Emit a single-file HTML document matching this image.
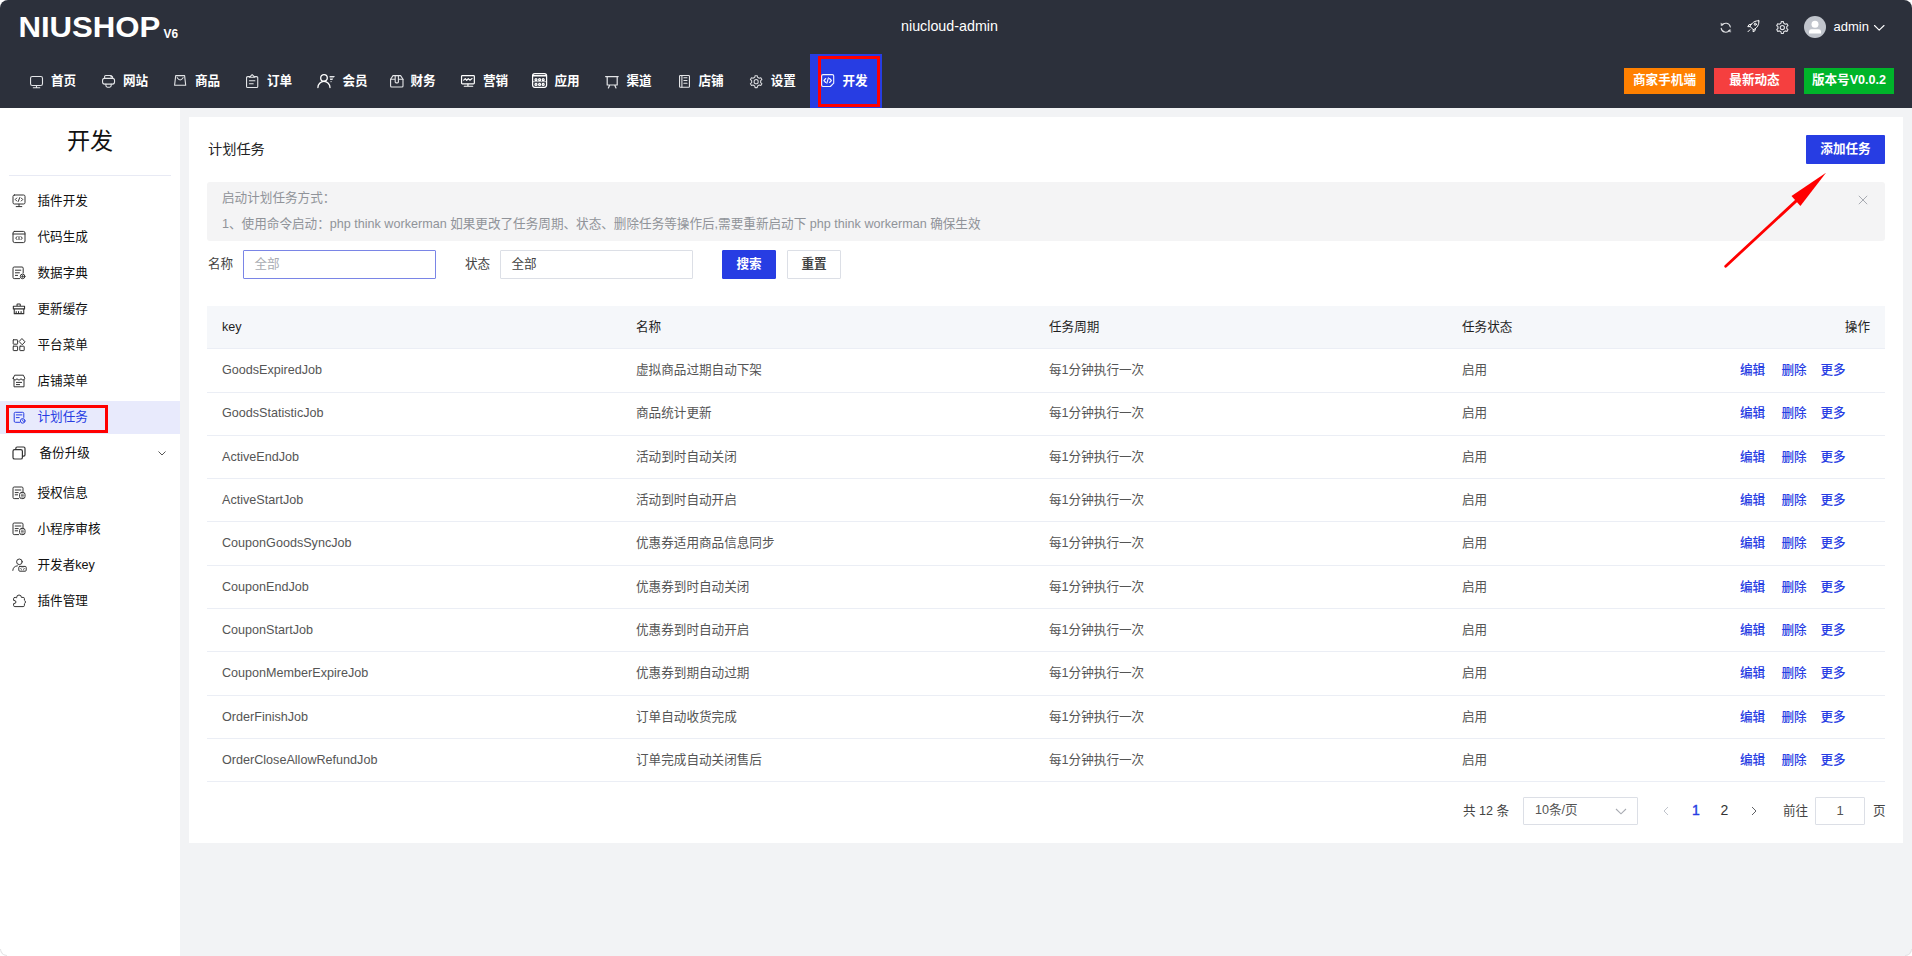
<!DOCTYPE html>
<html lang="zh-CN">
<head>
<meta charset="utf-8">
<title>计划任务</title>
<style>
*{box-sizing:border-box;margin:0;padding:0}
html,body{width:1912px;height:956px;overflow:hidden;background:#fff}
body{font-family:"Liberation Sans","Noto Sans CJK SC",sans-serif;font-size:13px;color:#333;position:relative}
svg{display:block;overflow:visible}
#hdr{position:absolute;left:0;top:0;width:1912px;height:108px;background:#2c303b;border-radius:8px 8px 0 0}
#hdr svg.ic,#hdr>svg{position:absolute}
#logo{left:20px;top:15px}
#title{position:absolute;left:0;width:1899px;top:17px;text-align:center;color:#fff;font-size:14.3px;line-height:18px}
#avatar{position:absolute;left:1804px;top:16px;width:22px;height:22px;border-radius:50%;background:#c0c4cc;overflow:hidden}
#uname{position:absolute;left:1833.5px;top:18px;color:#fff;font-size:13px;line-height:18px}
.nav{position:absolute;top:70.5px;height:20px;line-height:20px;color:#fff;font-size:12.6px;font-weight:bold;white-space:nowrap}
#navact{position:absolute;left:810px;top:54px;width:72px;height:54px;background:#273de3}
#navred{position:absolute;left:818px;top:56px;width:62px;height:51px;border:3px solid #ff0000}
.tag{position:absolute;top:68px;height:26px;line-height:25.4px;color:#fff;font-size:12.6px;font-weight:bold;text-align:center;white-space:nowrap}
#side{position:absolute;left:0;top:108px;width:180px;height:848px;background:#fff}
#stitle{position:absolute;left:0;top:15px;width:180px;text-align:center;font-size:23.1px;line-height:36px;color:#111}
#sline{position:absolute;left:9px;top:66.5px;width:162px;height:1px;background:#e8eaf4}
.mi{position:absolute;left:0;width:180px;height:33px;line-height:33px;font-size:12.6px;color:#111;white-space:nowrap}
.mi .mic{position:absolute;left:11.5px;top:9.5px;width:14px;height:14px}
.mi .mt{position:absolute;top:.6px}
.mi.act{background:#e8eafc;color:#273de3}
#sidered{position:absolute;left:6px;top:297px;width:102px;height:28px;border:3px solid #ff0000}
#main{position:absolute;left:180px;top:108px;width:1732px;height:848px;background:#f2f3f5;border-radius:0 0 7px 0}
#card{position:absolute;left:189px;top:117px;width:1714px;height:726px;background:#fff}
#ptitle{position:absolute;left:19px;top:21.7px;font-size:14.2px;line-height:20px;color:#222}
#addbtn{position:absolute;left:1617px;top:18px;width:79px;height:28.5px;line-height:28.5px;background:#273de3;color:#fff;font-size:12.6px;font-weight:bold;text-align:center;border-radius:1px}
#alert{position:absolute;left:18px;top:65px;width:1678px;height:58.5px;background:#f4f4f5;border-radius:3px;color:#909399;font-size:12.6px;white-space:nowrap}
#alert .al1{position:absolute;left:15px;top:6px;line-height:20px}
#alert .al2{position:absolute;left:15px;top:31.6px;line-height:20px}
#alert svg{position:absolute}
.lbl{position:absolute;top:136.7px;line-height:20px;font-size:12.6px;color:#444}
.inp{position:absolute;top:133px;width:193px;height:28.7px;border:1px solid #dcdfe6;border-radius:1px;font-size:12.6px;line-height:26.7px;padding-left:10.4px;background:#fff}
.inp.foc{border-color:#7a85e6}
.ph{color:#a8abb2}.pv{color:#444}
.btn{position:absolute;top:133px;width:54px;height:28.5px;line-height:26.5px;border:1px solid #dcdfe6;border-radius:1px;text-align:center;font-size:12.6px;font-weight:bold;color:#444;background:#fff}
.btn.pri{background:#273de3;border-color:#273de3;color:#fff}
#thead{position:absolute;left:18px;top:189px;width:1678px;height:42.5px;background:#f5f7fa;border-bottom:1px solid #ebeef5}
.th,.td{position:absolute;white-space:nowrap;font-size:12.6px;line-height:20px}
.th{color:#1f1f1f;top:11px}
.tr{position:absolute;left:18px;width:1678px;height:43.3px}
.bl{position:absolute;left:18px;width:1678px;height:1px;background:#ebeef5}
.td{color:#555;top:11px}
.td.k{}
.td.lnk{color:#273de3;font-weight:500}
#pg{position:absolute;left:0;top:680px;width:1714px;height:28px;font-size:12.6px;color:#444}
#pg svg{position:absolute}
.pt{position:absolute;top:4px;line-height:20px;white-space:nowrap}
.psel{position:absolute;left:1334px;top:0;width:115px;height:28px;border:1px solid #dcdfe6;border-radius:1px;line-height:24px;padding-left:11px;font-size:12.6px;color:#555}
.pn{position:absolute;top:3px;width:20px;text-align:center;line-height:20px;font-size:14px;color:#333}
.pn.cur{color:#273de3;-webkit-text-stroke:.4px #273de3}
.pinp{position:absolute;left:1626px;top:0;width:50px;height:28px;border:1px solid #dcdfe6;border-radius:1px;line-height:26px;text-align:center;font-size:13px;color:#555}
#arrow{position:absolute;left:0;top:0}
.cnr{position:absolute;bottom:0;width:7px;height:7px;border:1px solid #e4e4e6}
.cnr.l{left:0;border-width:0 0 1px 1px;border-radius:0 0 0 7px}
.cnr.r{right:0;border-width:0 1px 1px 0;border-radius:0 0 7px 0}
</style>
</head>
<body>
<div id="hdr">
<svg id="logo" width="170" height="30" viewBox="0 0 170 30"><text x="-1.6" y="22.3" font-family="Liberation Sans, sans-serif" font-weight="bold" font-size="29.3" fill="#fff" textLength="142" lengthAdjust="spacingAndGlyphs">NIUSHOP</text><text x="143.5" y="22.7" font-family="Liberation Sans, sans-serif" font-weight="bold" font-size="12.5" fill="#fff" textLength="14.5" lengthAdjust="spacingAndGlyphs">V6</text></svg>
<div id="title">niucloud-admin</div>
<svg class="ic" style="left:1719.6px;top:21.8px" width="11.5" height="11.3" viewBox="0 0 11.5 11.3" fill="none" stroke="#e4e5e8" stroke-width="1.1" stroke-linecap="round" stroke-linejoin="round"><path d="M2 3.200A4.600 4.600 0 0 1 10.300 5M1.200 6.300A4.600 4.600 0 0 0 9.500 8.200"/><path d="M1 1.200L3.600 2.300L1.300 3.700ZM10.500 10.100L7.900 9L10.200 7.600Z" fill="#e4e5e8" stroke-width=".3"/></svg>
<svg class="ic" style="left:1747.4px;top:20.2px" width="12.5" height="12.7" viewBox="0 0 12.5 12.7" fill="none" stroke="#fff" stroke-width="1" stroke-linecap="round" stroke-linejoin="round"><path d="M11.800 .8C8.500 .3 4.200 3 3.100 6.500L6.300 9.700C9.800 8.600 12.500 4.300 11.800 .8Z"/><circle cx="8.300" cy="4.300" r="1.050"/><path d="M4.300 4.300L1.900 4.800L.8 6.700L3.100 6.600M8.500 8.300L8 10.700L6.100 11.800L6.200 9.600M2.900 9.800L1 11.700"/></svg>
<svg class="ic" style="left:1775.7px;top:20.9px" width="12.7" height="13.1" viewBox="0 0 12.7 13.1" fill="none" stroke="#e0e1e5" stroke-width="1.1" stroke-linecap="round" stroke-linejoin="round"><path d="M4.98 2.26L5.28 0.65L7.42 0.65L7.72 2.26L9.38 3.22L10.93 2.67L12.00 4.52L10.75 5.59L10.75 7.51L12.00 8.58L10.93 10.43L9.38 9.88L7.72 10.84L7.42 12.45L5.28 12.45L4.98 10.84L3.32 9.88L1.77 10.43L0.70 8.58L1.95 7.51L1.95 5.59L0.70 4.52L1.77 2.67L3.32 3.22Z"/><circle cx="6.350" cy="6.550" r="2.100"/></svg>
<div id="avatar"><svg width="22" height="22" viewBox="0 0 22 22"><circle cx="11" cy="8.2" r="3.5" fill="#fff"/><path d="M5 17.6V15.6Q5 13.2 7.4 13.2H14.6Q17 13.2 17 15.6V17.6Z" fill="#fff"/></svg></div>
<div id="uname">admin</div>
<svg class="ic" style="left:1874px;top:24.5px" width="11" height="6" viewBox="0 0 11 6" fill="none" stroke="#fff" stroke-width="1.1" stroke-linecap="round" stroke-linejoin="round" ><path d="M.5 .5L5.2 5.2L10 .5"/></svg>
<div id="navact"></div>
<div class="nav" style="left:51px">首页</div>
<svg class="ic" style="left:29.75px;top:75.6px" width="13.05" height="12.3" viewBox="0 0 13.05 12.3" fill="none" stroke="#e4e5e8" stroke-width="1.1" stroke-linecap="round" stroke-linejoin="round"><rect x=".55" y=".55" width="11.95" height="8.9" rx="1.8"/><path d="M6.5 9.6V11.4M3.3 11.75H9.8"/></svg>
<div class="nav" style="left:123px">网站</div>
<svg class="ic" style="left:101.9px;top:75.3px" width="13.1" height="12.8" viewBox="0 0 13.1 12.8" fill="none" stroke="#e4e5e8" stroke-width="1.1" stroke-linecap="round" stroke-linejoin="round"><path d="M2.6 3.4V1.6Q2.6 .55 3.7 .55H9.2L10.6 1.9V3.4M9 .7V2H10.4"/><rect x=".55" y="3.4" width="12" height="5.7" rx="2"/><path d="M3.9 9.1V10.6Q3.9 12.2 5.5 12.2H7.6Q9.2 12.2 9.2 10.6V9.1"/></svg>
<div class="nav" style="left:195px">商品</div>
<svg class="ic" style="left:174px;top:75.1px" width="12.3" height="10.9" viewBox="0 0 12.3 10.9" fill="none" stroke="#e4e5e8" stroke-width="1.1" stroke-linecap="round" stroke-linejoin="round"><path d="M.6 10.3L1.7 .6H10.6L11.7 10.3Z"/><path d="M3.2 2.7Q6.15 7.2 9.1 2.7"/></svg>
<div class="nav" style="left:267px">订单</div>
<svg class="ic" style="left:245.9px;top:74px" width="12.3" height="14.1" viewBox="0 0 12.3 14.1" fill="none" stroke="#e4e5e8" stroke-width="1.1" stroke-linecap="round" stroke-linejoin="round"><path d="M3.7 2.6H1.7Q.55 2.6 .55 3.7V12.4Q.55 13.5 1.7 13.5H10.6Q11.75 13.5 11.75 12.4V3.7Q11.75 2.6 10.6 2.6H8.6"/><path d="M3.5 3.200L6.150 .6L8.800 3.200Z"/><path d="M3.4 6.800H8.900M3.400 9.800H7.200"/></svg>
<div class="nav" style="left:342.5px">会员</div>
<svg class="ic" style="left:316.9px;top:73.8px" width="17.9" height="14.1" viewBox="0 0 17.9 14.1" fill="none" stroke="#fff" stroke-width="1.1" stroke-linecap="round" stroke-linejoin="round"><circle cx="7" cy="3.9" r="3.300" stroke-width="1.3"/><path d="M.9 13.500A6.050 6.050 0 0 1 13 13.500" stroke-width="1.3"/><path d="M12.500 2H17.900L16.900 3.600H12.700ZM12.900 4.500H16.200L15.400 6H13.200ZM13.500 6.900H14.800L14.200 8.200H13.700Z" fill="#e4e5e8" stroke="none"/></svg>
<div class="nav" style="left:410.5px">财务</div>
<svg class="ic" style="left:389.8px;top:75.3px" width="13.6" height="12.6" viewBox="0 0 13.6 12.6" fill="none" stroke="#e4e5e8" stroke-width="1.1" stroke-linecap="round" stroke-linejoin="round"><path d="M.6 4.200L3 .6H10.600L13 4.200V11Q13 12 12 12H1.600Q.6 12 .6 11Z"/><path d="M.6 4.200H5.200M8.400 4.200H13M5.200 .8V7Q5.200 7.900 6.100 7.900H7.500Q8.400 7.900 8.400 7V.8"/></svg>
<div class="nav" style="left:483px">营销</div>
<svg class="ic" style="left:461px;top:75.1px" width="13.9" height="11.8" viewBox="0 0 13.9 11.8" fill="none" stroke="#fff" stroke-width="1.2" stroke-linecap="round" stroke-linejoin="round"><rect x=".55" y=".55" width="12.800" height="8.300" rx=".8"/><path d="M2.700 5.200L4.300 3.600L5.700 5.400L7.300 3.600L8.900 5.200L11.100 3.600M6.950 9V11M3.300 11.250H11.700"/></svg>
<div class="nav" style="left:554.5px">应用</div>
<svg class="ic" style="left:532.1px;top:73.2px" width="15.2" height="14.9" viewBox="0 0 15.2 14.9" fill="none" stroke="#fff" stroke-width="1.25" stroke-linecap="round" stroke-linejoin="round"><rect x=".6" y=".6" width="14" height="13.700" rx="2.200"/><path d="M.8 2.700H14.400" stroke-width="1.500"/><path d="M1 8.700H14.200" stroke-width=".7"/><circle cx="4" cy="6.700" r="1"/><circle cx="7.600" cy="6.700" r="1"/><circle cx="11.200" cy="6.700" r="1"/><circle cx="4" cy="11.400" r="1"/><circle cx="7.600" cy="11.400" r="1"/><circle cx="11.200" cy="11.400" r="1"/></svg>
<div class="nav" style="left:626.5px">渠道</div>
<svg class="ic" style="left:605.1px;top:75.5px" width="13.8" height="12.6" viewBox="0 0 13.8 12.6" fill="none" stroke="#e4e5e8" stroke-width="1.2" stroke-linecap="round" stroke-linejoin="round"><path d="M.6 .6H13.200M2.200 .8V9H12.200V.8M4.600 9.200L3.400 12M9.800 9.200L11 12"/></svg>
<div class="nav" style="left:698.5px">店铺</div>
<svg class="ic" style="left:678.8px;top:75.1px" width="11.0" height="12.8" viewBox="0 0 11.0 12.8" fill="none" stroke="#e4e5e8" stroke-width="1.1" stroke-linecap="round" stroke-linejoin="round"><rect x=".55" y=".55" width="9.900" height="11.700" rx=".8"/><path d="M2.900 .7V12.100M4.900 2.800H8M4.900 5.450H8M4.900 8.300H8"/></svg>
<div class="nav" style="left:770.7px">设置</div>
<svg class="ic" style="left:749.8px;top:74.8px" width="12.3" height="13.3" viewBox="0 0 12.3 13.3" fill="none" stroke="#d8d9dd" stroke-width="1.05" stroke-linecap="round" stroke-linejoin="round"><path d="M4.75 2.27L5.07 0.65L7.23 0.65L7.55 2.27L9.25 3.25L10.81 2.71L11.89 4.59L10.64 5.67L10.64 7.63L11.89 8.71L10.81 10.59L9.25 10.05L7.55 11.03L7.23 12.65L5.07 12.65L4.75 11.03L3.05 10.05L1.49 10.59L0.41 8.71L1.66 7.63L1.66 5.67L0.41 4.59L1.49 2.71L3.05 3.25Z"/><circle cx="6.15" cy="6.65" r="2.05"/></svg>
<div class="nav" style="left:842.5px">开发</div>
<svg class="ic" style="left:820.8px;top:74px" width="13.3" height="13.1" viewBox="0 0 13.3 13.1" fill="none" stroke="#f0f1ff" stroke-width="1.15" stroke-linecap="round" stroke-linejoin="round"><path d="M2 .6H11.300Q12.700 .6 12.700 2V9.200L9.400 12.500H2Q.6 12.500 .6 11.100V2Q.6 .6 2 .6Z"/><path d="M4.700 4.500L2.900 6.500L4.700 8.500M8.600 4.500L10.400 6.500L8.600 8.500M7.400 3.900L5.900 9.100"/></svg>
<div id="navred"></div>
<div class="tag" style="left:1624px;width:81px;background:#ff8000">商家手机端</div>
<div class="tag" style="left:1714px;width:81px;background:#f53f3f">最新动态</div>
<div class="tag" style="left:1804px;width:90px;background:#00b42a">版本号V0.0.2</div>
</div>
<div id="side">
<div id="stitle">开发</div><div id="sline"></div>
<div class="mi" style="top:76px"><span class="mic"><svg width="14" height="14" viewBox="0 0 14 14" fill="none" stroke="#333" stroke-width="1.0" stroke-linecap="round" stroke-linejoin="round"><rect x="1" y="1" width="12" height="9" rx="1.4"/><path d="M7 10.200V12.4M4.200 12.600H9.800M4.700 4L3.300 5.500L4.700 7M9.300 4L10.700 5.500L9.300 7M7.700 3.600L6.300 7.400" /></svg></span><span class="mt" style="left:37.5px">插件开发</span></div>
<div class="mi" style="top:112px"><span class="mic"><svg width="14" height="14" viewBox="0 0 14 14" fill="none" stroke="#333" stroke-width="1.0" stroke-linecap="round" stroke-linejoin="round"><rect x="1" y="1.400" width="12" height="11.200" rx="1.600"/><path d="M1 4H13M5 6.600L3.700 8.100L5 9.600M9 6.600L10.300 8.100L9 9.600M7 6.600V9.600"/></svg></span><span class="mt" style="left:37.5px">代码生成</span></div>
<div class="mi" style="top:148px"><span class="mic"><svg width="14" height="14" viewBox="0 0 14 14" fill="none" stroke="#333" stroke-width="1.0" stroke-linecap="round" stroke-linejoin="round"><path d="M7.600 12.600H2.200Q1 12.600 1 11.400V2.200Q1 1 2.200 1H10Q11.200 1 11.200 2.200V7"/><path d="M3.400 4.200H8.800M3.400 6.800H7.400M3.400 9.400H5.600"/><circle cx="10.600" cy="10.400" r="2.300"/><path d="M9.500 10.400H11.700M10.600 9.300V11.500" stroke-width=".8"/></svg></span><span class="mt" style="left:37.5px">数据字典</span></div>
<div class="mi" style="top:184px"><span class="mic"><svg width="14" height="14" viewBox="0 0 14 14" fill="none" stroke="#333" stroke-width="1.1" stroke-linecap="round" stroke-linejoin="round"><path d="M5.05 4.25V2.5Q5.05 1.95 5.6 1.95H7.7Q8.25 1.95 8.25 2.5V4.25M1.35 4.25H12.55V6.9H1.35ZM2.25 6.9V11.65H11.75V6.9M4.2 9.6V11.5M6.55 9.6V11.5M9.1 9.6V11.5"/></svg></span><span class="mt" style="left:37.5px">更新缓存</span></div>
<div class="mi" style="top:220px"><span class="mic"><svg width="14" height="14" viewBox="0 0 14 14" fill="none" stroke="#333" stroke-width="1.0" stroke-linecap="round" stroke-linejoin="round"><rect x="1.200" y="1.800" width="4.400" height="4.400" rx=".4"/><rect x="1.200" y="8.200" width="4.400" height="4.400" rx=".4"/><rect x="7.800" y="8.200" width="4.400" height="4.400" rx=".4"/><path d="M10.200 .8L13 3.800L10.200 6.800L7.400 3.800Z"/></svg></span><span class="mt" style="left:37.5px">平台菜单</span></div>
<div class="mi" style="top:256px"><span class="mic"><svg width="14" height="14" viewBox="0 0 14 14" fill="none" stroke="#333" stroke-width="1.0" stroke-linecap="round" stroke-linejoin="round"><path d="M1.200 4.200L2.600 1.200H11.400L12.800 4.200Q12.600 6 11 6Q9.400 6 9 4.600Q8.600 6 7 6Q5.400 6 5 4.600Q4.600 6 3 6Q1.400 6 1.200 4.200Z"/><path d="M2 6V12.800H12V6M4.400 8.400H9.600M4.400 10.600H7.600"/></svg></span><span class="mt" style="left:37.5px">店铺菜单</span></div>
<div class="mi act" style="top:292.5px"><span class="mic"><svg width="14" height="14" viewBox="0 0 14 14" fill="none" stroke="#273de3" stroke-width="1" stroke-linecap="round" stroke-linejoin="round"><path d="M7.600 12.300H3.400Q2.200 12.300 2.200 11.100V3.500Q2.200 2.300 3.400 2.300H10.600Q11.800 2.300 11.800 3.500V7.400M4.300 4.900H9.900M4.300 7.600H7.200"/><circle cx="10.700" cy="10.900" r="2.300"/><path d="M10.700 9.800V11L11.500 11.500" stroke-width=".8"/></svg></span><span class="mt" style="left:37.5px">计划任务</span></div>
<div class="mi" style="top:328px"><span class="mic"><svg width="14" height="14" viewBox="0 0 14 14" fill="none" stroke="#333" stroke-width="1.2" stroke-linecap="round" stroke-linejoin="round"><rect x="1" y="3.600" width="9.400" height="9.400" rx="1.600"/><path d="M3.800 3.400V2.400Q3.800 1 5.200 1H11.600Q13 1 13 2.400V8.800Q13 10.200 11.600 10.200H10.600"/></svg></span><span class="mt" style="left:39.5px">备份升级</span></div>
<div class="mi" style="top:368px"><span class="mic"><svg width="14" height="14" viewBox="0 0 14 14" fill="none" stroke="#333" stroke-width="1.0" stroke-linecap="round" stroke-linejoin="round"><path d="M6.600 12.600H2.200Q1 12.600 1 11.400V2.200Q1 1 2.200 1H9.800Q11 1 11 2.200V5.600"/><path d="M3.200 6.600H6.200M3.200 8.800H5.600M3.200 4H8.800"/><rect x="7.600" y="6.400" width="5.400" height="6.200" rx="2"/><path d="M9.400 8.200H11.400M9.400 9.600H11.400M9.400 11H11.400" stroke-width=".7"/></svg></span><span class="mt" style="left:37.5px">授权信息</span></div>
<div class="mi" style="top:404px"><span class="mic"><svg width="14" height="14" viewBox="0 0 14 14" fill="none" stroke="#333" stroke-width="1.0" stroke-linecap="round" stroke-linejoin="round"><path d="M6.600 12.600H2.200Q1 12.600 1 11.400V2.200Q1 1 2.200 1H9.800Q11 1 11 2.200V5.600"/><path d="M3.200 6.600H6.200M3.200 8.800H5.600M3.200 4H8.800"/><rect x="7.600" y="6.400" width="5.400" height="6.200" rx="2"/><path d="M9.400 8.200H11.400M9.400 9.600H11.400M9.400 11H11.400" stroke-width=".7"/></svg></span><span class="mt" style="left:37.5px">小程序审核</span></div>
<div class="mi" style="top:440px"><span class="mic"><svg width="15" height="14" viewBox="0 0 15 14" fill="none" stroke="#333" stroke-width="1.0" stroke-linecap="round" stroke-linejoin="round"><circle cx="7.400" cy="3.800" r="2.800"/><path d="M.8 12.400Q1 8.200 5.400 7.800"/><rect x="6.800" y="8.400" width="7.400" height="4.800" rx="1"/><path d="M9.600 9.800L8.600 10.800L9.600 11.800M11.400 9.800L12.400 10.800L11.400 11.800" stroke-width=".8"/></svg></span><span class="mt" style="left:37.5px">开发者key</span></div>
<div class="mi" style="top:476px"><span class="mic"><svg width="14" height="14" viewBox="0 0 14 14" fill="none" stroke="#333" stroke-width="1.0" stroke-linecap="round" stroke-linejoin="round"><path d="M4.600 3.400Q4.600 1 7 1Q9.400 1 9.400 3.400H11.200Q12.400 3.400 12.400 4.600V6.200Q13.400 6.600 13.400 8Q13.400 9.400 12.400 9.800V11.400Q12.400 12.600 11.200 12.600H2.800Q1.600 12.600 1.600 11.400V9.600Q4 9.600 4 8Q4 6.400 1.600 6.400V4.600Q1.600 3.400 2.800 3.400Z"/></svg></span><span class="mt" style="left:37.5px">插件管理</span></div>
<svg style="position:absolute;left:157.5px;top:343px" width="8" height="5" viewBox="0 0 8 5" fill="none" stroke="#555" stroke-width="1"><path d="M.5 .5L4 4L7.500 .5"/></svg>
<div id="sidered"></div>
</div>
<div id="main"></div>
<div id="card">
<div id="ptitle">计划任务</div>
<div id="addbtn">添加任务</div>
<div id="alert"><div class="al1">启动计划任务方式：</div><div class="al2">1、使用命令启动：php think workerman 如果更改了任务周期、状态、删除任务等操作后,需要重新启动下 php think workerman 确保生效</div><svg style="left:1651.3px;top:13.2px" width="10" height="10" viewBox="0 0 10 10" fill="none" stroke="#a8abb2" stroke-width="1"><path d="M.8 .8L9.200 9.200M9.200 .8L.8 9.200"/></svg></div>
<div class="lbl" style="left:19px">名称</div><div class="inp foc" style="left:54px"><span class="ph">全部</span></div>
<div class="lbl" style="left:276px">状态</div><div class="inp" style="left:311px"><span class="pv">全部</span></div>
<div class="btn pri" style="left:533px">搜索</div><div class="btn" style="left:598px">重置</div>
<div id="thead"><span class="th" style="left:15px">key</span><span class="th" style="left:429px">名称</span><span class="th" style="left:842px">任务周期</span><span class="th" style="left:1255px">任务状态</span><span class="th" style="right:15px">操作</span></div>
<div class="tr" style="top:231.8px"><span class="td k" style="left:15px">GoodsExpiredJob</span><span class="td" style="left:429px">虚拟商品过期自动下架</span><span class="td" style="left:842px">每1分钟执行一次</span><span class="td" style="left:1255px">启用</span><span class="td lnk" style="left:1533px">编辑</span><span class="td lnk" style="left:1574.5px">删除</span><span class="td lnk" style="left:1613.5px">更多</span></div>
<div class="tr" style="top:274.8px"><span class="td k" style="left:15px">GoodsStatisticJob</span><span class="td" style="left:429px">商品统计更新</span><span class="td" style="left:842px">每1分钟执行一次</span><span class="td" style="left:1255px">启用</span><span class="td lnk" style="left:1533px">编辑</span><span class="td lnk" style="left:1574.5px">删除</span><span class="td lnk" style="left:1613.5px">更多</span></div>
<div class="tr" style="top:318.8px"><span class="td k" style="left:15px">ActiveEndJob</span><span class="td" style="left:429px">活动到时自动关闭</span><span class="td" style="left:842px">每1分钟执行一次</span><span class="td" style="left:1255px">启用</span><span class="td lnk" style="left:1533px">编辑</span><span class="td lnk" style="left:1574.5px">删除</span><span class="td lnk" style="left:1613.5px">更多</span></div>
<div class="tr" style="top:361.8px"><span class="td k" style="left:15px">ActiveStartJob</span><span class="td" style="left:429px">活动到时自动开启</span><span class="td" style="left:842px">每1分钟执行一次</span><span class="td" style="left:1255px">启用</span><span class="td lnk" style="left:1533px">编辑</span><span class="td lnk" style="left:1574.5px">删除</span><span class="td lnk" style="left:1613.5px">更多</span></div>
<div class="tr" style="top:404.8px"><span class="td k" style="left:15px">CouponGoodsSyncJob</span><span class="td" style="left:429px">优惠券适用商品信息同步</span><span class="td" style="left:842px">每1分钟执行一次</span><span class="td" style="left:1255px">启用</span><span class="td lnk" style="left:1533px">编辑</span><span class="td lnk" style="left:1574.5px">删除</span><span class="td lnk" style="left:1613.5px">更多</span></div>
<div class="tr" style="top:448.8px"><span class="td k" style="left:15px">CouponEndJob</span><span class="td" style="left:429px">优惠券到时自动关闭</span><span class="td" style="left:842px">每1分钟执行一次</span><span class="td" style="left:1255px">启用</span><span class="td lnk" style="left:1533px">编辑</span><span class="td lnk" style="left:1574.5px">删除</span><span class="td lnk" style="left:1613.5px">更多</span></div>
<div class="tr" style="top:491.8px"><span class="td k" style="left:15px">CouponStartJob</span><span class="td" style="left:429px">优惠券到时自动开启</span><span class="td" style="left:842px">每1分钟执行一次</span><span class="td" style="left:1255px">启用</span><span class="td lnk" style="left:1533px">编辑</span><span class="td lnk" style="left:1574.5px">删除</span><span class="td lnk" style="left:1613.5px">更多</span></div>
<div class="tr" style="top:534.8px"><span class="td k" style="left:15px">CouponMemberExpireJob</span><span class="td" style="left:429px">优惠券到期自动过期</span><span class="td" style="left:842px">每1分钟执行一次</span><span class="td" style="left:1255px">启用</span><span class="td lnk" style="left:1533px">编辑</span><span class="td lnk" style="left:1574.5px">删除</span><span class="td lnk" style="left:1613.5px">更多</span></div>
<div class="tr" style="top:578.8px"><span class="td k" style="left:15px">OrderFinishJob</span><span class="td" style="left:429px">订单自动收货完成</span><span class="td" style="left:842px">每1分钟执行一次</span><span class="td" style="left:1255px">启用</span><span class="td lnk" style="left:1533px">编辑</span><span class="td lnk" style="left:1574.5px">删除</span><span class="td lnk" style="left:1613.5px">更多</span></div>
<div class="tr" style="top:621.8px"><span class="td k" style="left:15px">OrderCloseAllowRefundJob</span><span class="td" style="left:429px">订单完成自动关闭售后</span><span class="td" style="left:842px">每1分钟执行一次</span><span class="td" style="left:1255px">启用</span><span class="td lnk" style="left:1533px">编辑</span><span class="td lnk" style="left:1574.5px">删除</span><span class="td lnk" style="left:1613.5px">更多</span></div>
<div class="bl" style="top:275px"></div>
<div class="bl" style="top:318px"></div>
<div class="bl" style="top:361px"></div>
<div class="bl" style="top:404px"></div>
<div class="bl" style="top:448px"></div>
<div class="bl" style="top:491px"></div>
<div class="bl" style="top:534px"></div>
<div class="bl" style="top:578px"></div>
<div class="bl" style="top:621px"></div>
<div class="bl" style="top:664px"></div>
<div id="pg"><span class="pt" style="left:1274px">共 12 条</span><div class="psel"><span>10条/页</span><svg style="left:91px;top:10px" width="12" height="7" viewBox="0 0 12 7" fill="none" stroke="#a8abb2" stroke-width="1.100"><path d="M1 1L6 5.800L11 1"/></svg></div><svg style="left:1474px;top:9px" width="6" height="10" viewBox="0 0 6 10" fill="none" stroke="#c0c4cc" stroke-width="1"><path d="M5 1L1 5L5 9"/></svg><span class="pn cur" style="left:1497px">1</span><span class="pn" style="left:1525.5px">2</span><svg style="left:1561.500px;top:9px" width="6" height="10" viewBox="0 0 6 10" fill="none" stroke="#606266" stroke-width="1"><path d="M1 1L5 5L1 9"/></svg><span class="pt" style="left:1594px">前往</span><div class="pinp">1</div><span class="pt" style="left:1684px">页</span></div>
</div>
<div class="cnr l"></div><div class="cnr r"></div>
<svg id="arrow" width="1912" height="956" viewBox="0 0 1912 956"><path d="M1725.7 266.2L1796.5 200.6" stroke="#ff0000" stroke-width="2.8" stroke-linecap="round" fill="none"/><path d="M1826 172.8L1791.5 196.1L1800.4 205.9Z" fill="#ff0000"/></svg>
</body>
</html>
